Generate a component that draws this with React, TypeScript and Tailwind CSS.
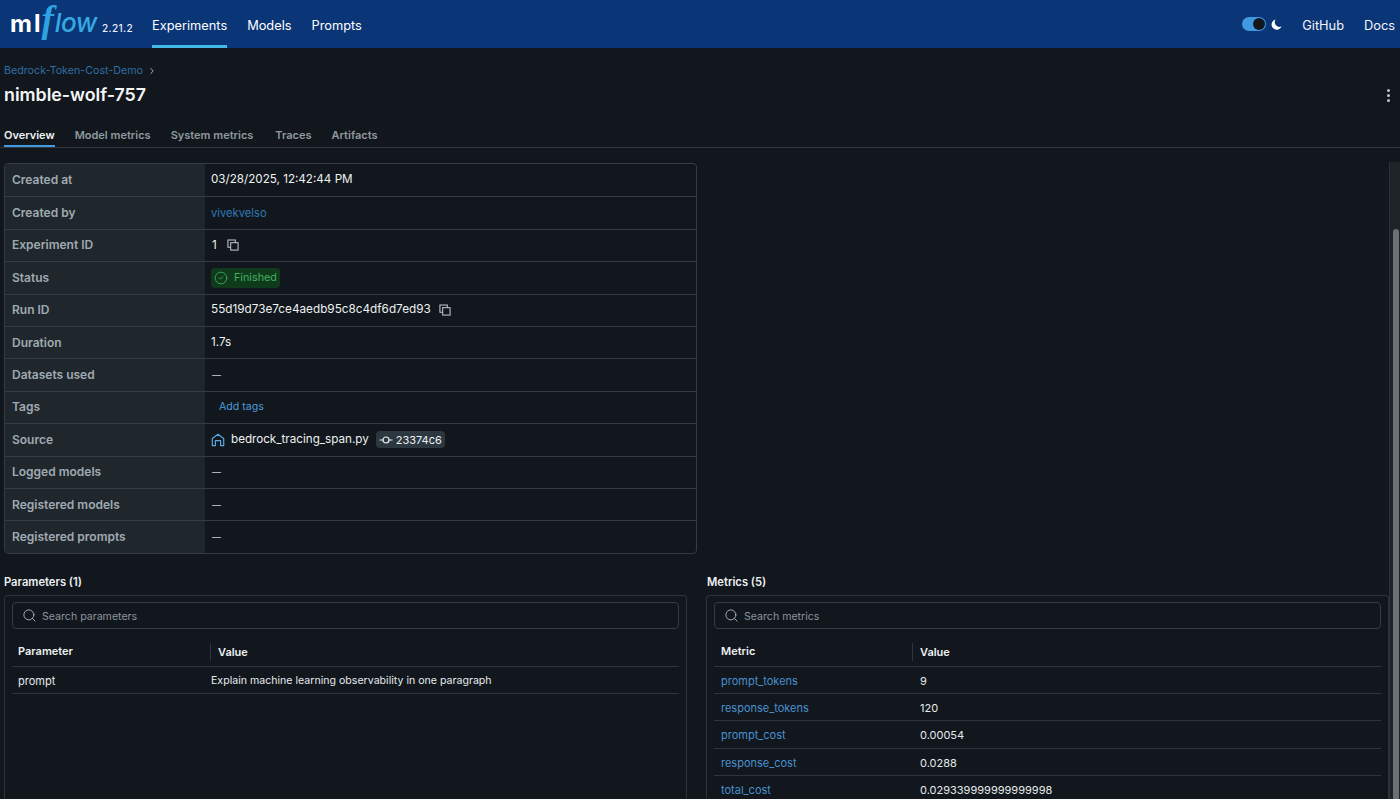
import React from 'react';
import { ChevronRight, CircleCheck, Search } from 'lucide-react';

const font = { fontFamily: 'Inter, "Liberation Sans", sans-serif' };

const Dash = () => <span className="pl-[1px] text-[9px] text-[#c9d0d6]">—</span>;

const CopyIcon = () => (
    <svg viewBox="0 0 13 13" className="h-[12px] w-[12px]" fill="none" stroke="#c4ccd3" strokeWidth="1.1">
        <path d="M3.5 9H1V1h8v2.5" />
        <rect x="4" y="4" width="8" height="8" />
    </svg>
);

const HomeIcon = () => (
    <svg viewBox="0 0 14 14" className="h-[14px] w-[14px]" fill="none" stroke="#5aa7e6" strokeWidth="1.2" strokeLinejoin="round">
        <path d="M1.3 12.6V5.6L7 1.3l5.7 4.3v7h-3.1V7.6H4.4v5z" />
    </svg>
);

const CommitIcon = () => (
    <svg viewBox="0 0 14 14" className="h-[14px] w-[14px]" fill="none" stroke="#eef1f3" strokeWidth="1.2">
        <circle cx="7" cy="7" r="3" />
        <path d="M.5 7H4M10 7h3.5" />
    </svg>
);

const overview: { label: string; value: React.ReactNode }[] = [
    { label: 'Created at', value: <span className="text-[#eef1f3]">03/28/2025, 12:42:44 PM</span> },
    { label: 'Created by', value: <span className="text-[11.2px] text-[#2f77b8]">vivekvelso</span> },
    {
        label: 'Experiment ID',
        value: (
            <span className="flex items-center gap-[10px] pl-[1px] text-[#eef1f3]">
                1 <CopyIcon />
            </span>
        ),
    },
    {
        label: 'Status',
        value: (
            <span className="flex h-[20px] items-center gap-[6px] rounded-[4px] bg-[#0f3a1c] px-[3px] text-[10.8px] text-[#46b062]">
                <CircleCheck className="h-[14px] w-[14px]" strokeWidth={1.4} /> Finished
            </span>
        ),
    },
    {
        label: 'Run ID',
        value: (
            <span className="flex items-center gap-[8px] text-[11.75px] text-[#eef1f3]">
                55d19d73e7ce4aedb95c8c4df6d7ed93 <CopyIcon />
            </span>
        ),
    },
    { label: 'Duration', value: <span className="text-[#eef1f3]">1.7s</span> },
    { label: 'Datasets used', value: <Dash /> },
    { label: 'Tags', value: <span className="pl-[8px] text-[10.6px] text-[#4f9bdc]">Add tags</span> },
    {
        label: 'Source',
        value: (
            <span className="flex items-center text-[#eef1f3]">
                <HomeIcon />
                <span className="ml-[6px]">bedrock_tracing_span.py</span>
                <span className="ml-[7px] flex h-[17px] items-center gap-[3px] rounded-[4px] bg-[#2c373f] px-[3px] text-[11px]">
                    <CommitIcon /> 23374c6
                </span>
            </span>
        ),
    },
    { label: 'Logged models', value: <Dash /> },
    { label: 'Registered models', value: <Dash /> },
    { label: 'Registered prompts', value: <Dash /> },
];

const SearchBox: React.FC<{ placeholder: string }> = ({ placeholder }) => (
    <div className="flex h-[27px] items-center gap-[5px] rounded-[4px] border border-[#333d45] pl-[9px]">
        <Search className="h-[15px] w-[15px] text-[#c0c8ce]" strokeWidth={1.3} />
        <span className="pt-[3px] text-[10.6px] text-[#8b959d]">{placeholder}</span>
    </div>
);

const DataPanel: React.FC<{
    title: string;
    search: string;
    column: string;
    rows: { name: string; value: string }[];
    link?: boolean;
    titleClass: string;
    columnClass: string;
    nameClass: string;
    rowClass: string;
    className: string;
}> = ({ title, search, column, rows, link, titleClass, columnClass, nameClass, rowClass, className }) => (
    <section className={className}>
        <h3 className={`h-[29px] pt-[8px] text-[11.2px] font-semibold leading-[16px] text-[#eef1f3] ${titleClass}`}>{title}</h3>
        <div className="h-[300px] rounded-t-[4px] border border-b-0 border-[#2c353c] px-[7px] pt-[6px]">
            <SearchBox placeholder={search} />
            <div className="mt-[9px] flex h-[29px] items-center border-b border-[#2c353c] text-[11px] font-semibold text-[#eef1f3]">
                <span className={`w-[198px] ${columnClass}`}>{column}</span>
                <span className="h-[18px] border-l border-[#2c353c] pl-[7px] leading-[18px]">Value</span>
            </div>
            {rows.map(row => (
                <div key={row.name} className="flex h-[27.4px] items-center border-b border-[#2c353c] pt-[2px] text-[11px]">
                    <span className={`${nameClass} ${link ? 'text-[#4a90cf]' : 'text-[#e6eaed]'}`}>{row.name}</span>
                    <span className={`${rowClass} text-[#e6eaed]`}>{row.value}</span>
                </div>
            ))}
        </div>
    </section>
);

export default function App() {
    return (
        <div className="flex h-screen w-full flex-col overflow-hidden bg-[#11171c]" style={font}>
            <header className="flex h-12 shrink-0 items-stretch bg-[#0a3576] pl-[10px]">
                <div className="flex w-[142px] items-baseline pt-[6px]">
                    <span className="text-[24px] font-bold leading-[27px] tracking-[2px] text-white">ml</span>
                    <span className="-ml-[1px] text-[37px] font-bold italic leading-[27px] text-[#2ea3e3]" style={{ fontFamily: '"Liberation Serif", serif' }}>f</span>
                    <span className="ml-[1px] text-[26px] font-medium italic leading-[27px] tracking-[-0.4px] text-[#36a9e4]">low</span>
                    <span className="ml-[5px] text-[10px] font-medium tracking-[0.4px] text-[#eaf0f6]">2.21.2</span>
                </div>
                <nav className="flex gap-[20px] text-[12.8px] text-white">
                    <a className="flex items-center border-b-[3px] border-[#43b9e8] pt-[7px]">Experiments</a>
                    <a className="flex items-center pt-[4px]">Models</a>
                    <a className="flex items-center pt-[4px]">Prompts</a>
                </nav>
                <div className="ml-auto flex items-center pr-[5px] pt-[4px] text-[12.8px] text-[#f2f5f8]">
                    <span className="-mt-[4px] flex h-[14px] w-[24px] items-center justify-end rounded-full bg-[#4299e1] pr-[1px]">
                        <span className="h-[12px] w-[12px] rounded-full bg-[#11171c]" />
                    </span>
                    <svg viewBox="0 0 12 12" className="-mt-[4px] ml-[5px] h-[11px] w-[11px]" fill="white">
                        <path d="M5 .6a5.6 5.6 0 1 0 6.4 7.6A5.2 5.2 0 0 1 5 .6z" />
                    </svg>
                    <span className="ml-[20px]">GitHub</span>
                    <span className="ml-[20px]">Docs</span>
                </div>
            </header>

            <div className="shrink-0 px-[4px]">
                <div className="flex items-center pt-[16px] text-[10.7px] leading-[13px] text-[#2f6ea8]">
                    Bedrock-Token-Cost-Demo
                    <ChevronRight className="ml-[4px] h-[10px] w-[10px] text-[#c4ccd3]" strokeWidth={2} />
                </div>
                <div className="flex h-[37px] items-center justify-between">
                    <h1 className="text-[17.8px] font-semibold text-[#f4f6f8]">nimble-wolf-757</h1>
                    <span className="mr-[6px] flex flex-col gap-[2px]">
                        <span className="h-[3px] w-[3px] rounded-full bg-[#c0c5c9]" />
                        <span className="h-[3px] w-[3px] rounded-full bg-[#c0c5c9]" />
                        <span className="h-[3px] w-[3px] rounded-full bg-[#c0c5c9]" />
                    </span>
                </div>
            </div>

            <div className="mt-[3px] flex h-[31px] shrink-0 items-stretch gap-[20px] border-b border-[#30383e] pl-[4px] text-[11px] font-semibold text-[#8f999f]">
                <span className="flex items-center border-b-2 border-[#4299e1] pt-[9px] text-[#f0f3f5]">Overview</span>
                <span className="flex items-center pt-[7px]">Model metrics</span>
                <span className="flex items-center pt-[7px]">System metrics</span>
                <span className="ml-[2px] flex items-center pt-[7px]">Traces</span>
                <span className="flex items-center pt-[7px]">Artifacts</span>
            </div>

            <div className="flex min-h-0 flex-1">
                <main className="min-w-0 flex-1 pl-[4px] pt-[15px]">
                    <div className="w-[693px] overflow-hidden rounded-[4px] border border-[#333d45] text-[11.65px]">
                        {overview.map((row, i) => (
                            <div key={row.label} className={`flex h-[32.4px] ${i > 0 ? 'border-t border-[#333d45]' : ''}`}>
                                <div className="flex w-[200px] shrink-0 items-center bg-[#1f272d] pl-[7px] text-[12px] font-semibold text-[#a0aab1]">{row.label}</div>
                                <div className="flex items-center pl-[6px]">{row.value}</div>
                            </div>
                        ))}
                    </div>
                    <div className="mt-[12px] flex">
                        <DataPanel
                            className="w-[683px]"
                            title="Parameters (1)"
                            search="Search parameters"
                            column="Parameter"
                            titleClass=""
                            columnClass="pl-[6px]"
                            nameClass="w-[199px] pl-[6px]"
                            rowClass="text-[10.6px]"
                            rows={[{ name: 'prompt', value: 'Explain machine learning observability in one paragraph' }]}
                        />
                        <DataPanel
                            className="ml-[19px] w-[683px]"
                            title="Metrics (5)"
                            search="Search metrics"
                            column="Metric"
                            titleClass="pl-[1px]"
                            columnClass="pl-[7px]"
                            nameClass="w-[206px] pl-[7px]"
                            rowClass="text-[11px]"
                            link
                            rows={[
                                { name: 'prompt_tokens', value: '9' },
                                { name: 'response_tokens', value: '120' },
                                { name: 'prompt_cost', value: '0.00054' },
                                { name: 'response_cost', value: '0.0288' },
                                { name: 'total_cost', value: '0.029339999999999998' },
                            ]}
                        />
                    </div>
                </main>
                <div className="mt-[14px] w-[11px] shrink-0 border-l border-[#2b3238] bg-[#1e2327] pl-[3px] pr-[1px]">
                    <div className="mt-[67px] h-full rounded-full bg-[#6b7074]" />
                </div>
            </div>
        </div>
    );
}
